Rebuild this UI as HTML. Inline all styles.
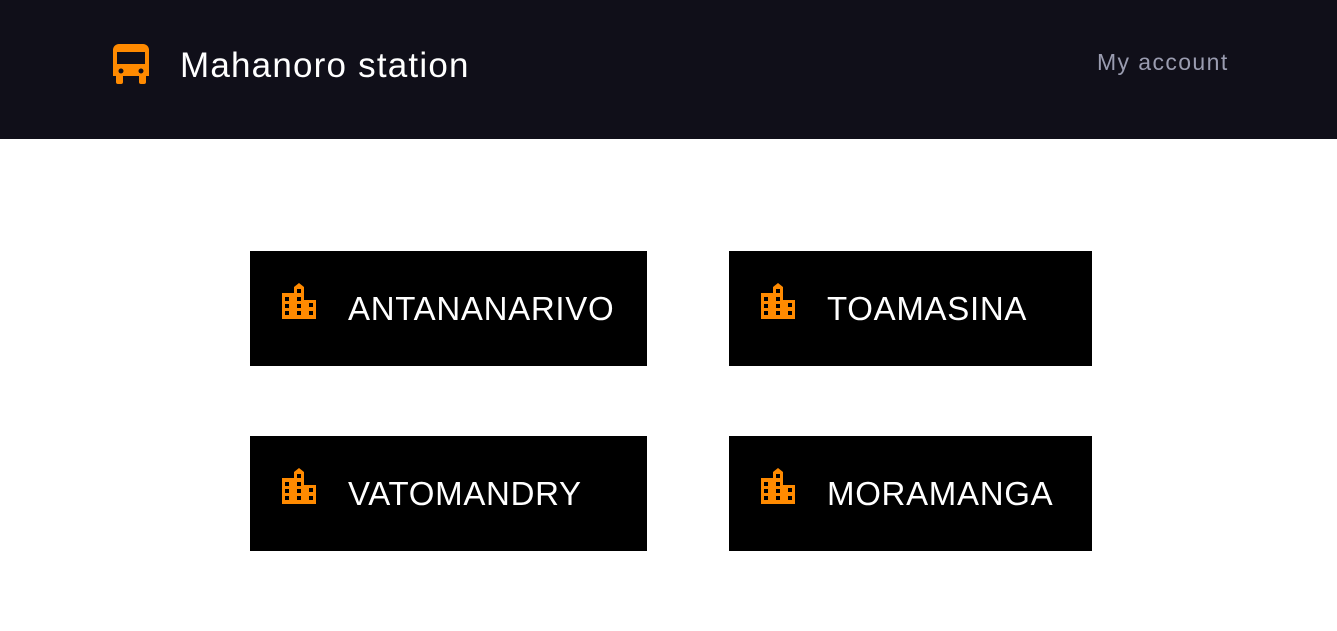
<!DOCTYPE html>
<html><head><style>
body{margin:0;width:1337px;height:631px;background:#fff;font-family:"Liberation Sans",sans-serif;position:relative;overflow:hidden}
.hdr{position:absolute;left:0;top:0;width:1337px;height:139px;background:#100f19}
.title{position:absolute;left:180px;top:46px;color:#fff;font-size:35px;line-height:40px;letter-spacing:1.2px}
.acct{position:absolute;left:1097px;top:48px;color:#9a9cb0;font-size:23px;line-height:28px;letter-spacing:1.4px}
.btn{position:absolute;background:#000;height:115px}
.btn svg{position:absolute;left:32px;top:32px}
.btn span{position:absolute;left:98px;top:38px;color:#fff;font-size:33px;line-height:40px;letter-spacing:0.7px}
</style></head><body>
<div class="hdr">
<svg style="position:absolute;left:113px;top:44px" width="36" height="40" viewBox="0 0 36 40">
<path fill="#ff8a00" d="M6 0h24a6 6 0 0 1 6 6v26h-3v6a2 2 0 0 1-2 2h-3a2 2 0 0 1-2-2v-6H10v6a2 2 0 0 1-2 2H5a2 2 0 0 1-2-2v-6H0V6a6 6 0 0 1 6-6z"/>
<rect x="4" y="8" width="28" height="12" fill="#100f19"/>
<circle cx="8" cy="27" r="2.5" fill="#100f19"/><circle cx="28" cy="27" r="2.5" fill="#100f19"/>
</svg>
<div class="title">Mahanoro station</div>
<div class="acct">My account</div>
</div>
<svg width="0" height="0" style="position:absolute"><defs><g id="b">
<path fill="#ff8a00" d="M0 10h12V4l5-4 5 4v13h12v19H0z"/>
<g fill="#000"><rect x="3" y="14" width="4" height="4"/><rect x="15" y="6" width="4" height="4"/><rect x="15" y="14" width="4" height="4"/><rect x="27" y="20" width="4" height="4"/><rect x="3" y="21" width="4" height="4"/><rect x="15" y="21" width="4" height="4"/><rect x="3" y="28" width="4" height="4"/><rect x="15" y="28" width="4" height="4"/><rect x="27" y="28" width="4" height="4"/></g>
</g></defs></svg>
<div class="btn" style="left:250px;top:251px;width:397px"><svg width="34" height="36"><use href="#b"/></svg><span>ANTANANARIVO</span></div>
<div class="btn" style="left:729px;top:251px;width:363px"><svg width="34" height="36"><use href="#b"/></svg><span>TOAMASINA</span></div>
<div class="btn" style="left:250px;top:436px;width:397px"><svg width="34" height="36"><use href="#b"/></svg><span>VATOMANDRY</span></div>
<div class="btn" style="left:729px;top:436px;width:363px"><svg width="34" height="36"><use href="#b"/></svg><span>MORAMANGA</span></div>
</body></html>
